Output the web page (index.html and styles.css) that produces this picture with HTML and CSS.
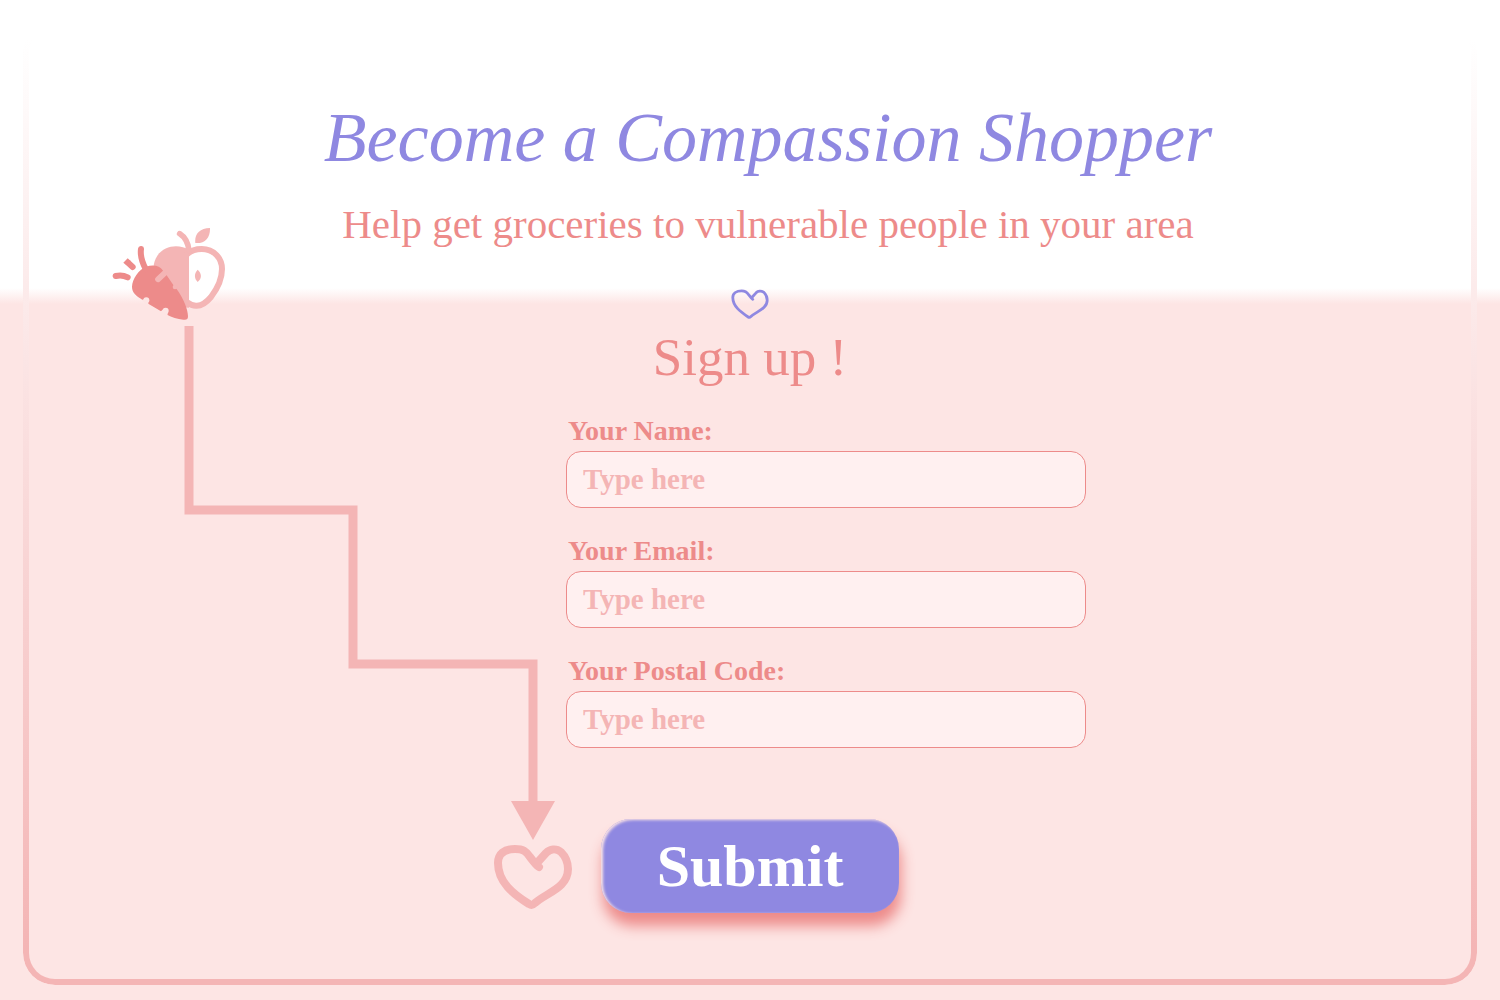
FILE: index.html
```html
<!DOCTYPE html>
<html lang="en">
<head>
<meta charset="utf-8">
<meta name="viewport" content="width=device-width, initial-scale=1">
<title>Become a Compassion Shopper</title>
<link rel="stylesheet" href="styles.css">
</head>
<body>
<main class="card">
  <svg class="trail" viewBox="108 224 472 692" aria-hidden="true">
    <g transform="translate(100 215) scale(.33333)">
      <!-- halved apple -->
      <path class="apple-flesh" d="M267 120C295 98 366 100 366 160C366 200 330 272 288 272L267 266Z"/>
      <path class="rose" d="M267 104C240 88 195 88 172 122C160 140 158 160 164 180L225 275L267 278Z"/>
      <path class="rose-line" stroke-width="18" d="M262 117C276 104 288 102 305 102C342 102 366 130 366 162C366 195 349 225 333 246C318 264 302 273 288 272C278 272 272 270 262 262"/>
      <path class="rose-line" stroke-width="17" d="M239 56C253 65 264 82 267 106"/>
      <path class="rose" d="M330 39C298 40 283 58 286 84C316 86 331 68 330 39ZM293 164C306 176 306 190 293 201C282 190 282 176 293 164Z"/>
      <!-- carrot -->
      <path class="coral" d="M96 215C97 192 116 163 138 155C160 148 180 152 188 166L202 184L220 210L232 225C250 250 264 284 264 304C264 314 259 315 250 314C232 312 215 307 201 299L183 289L146 267L127 254C108 243 96 232 96 215Z"/>
      <path class="rose-line" stroke-width="17" d="M193 175L174 193"/>
      <circle class="rose" cx="225" cy="216" r="7"/>
      <circle class="bite" cx="139" cy="256" r="9"/>
      <circle class="bite" cx="197" cy="287" r="9"/>
      <path class="bite" d="M126 255L139 250L145 264L144 272ZM181 290L193 280L204 290L202 302Z"/>
      <path class="coral-line" d="M123 102C120 123 126 141 137 162M47 183Q66 178 83 187M85 144L98 156"/>
      <path class="coral" d="M83 130L92 138L79 151L70 143Z"/>
    </g>
    <path class="trail-line" d="M189 326V510H353V664H533V804"/>
    <path class="rose" d="M511 801H555L533 840Z"/>
    <path class="rose-line" stroke-width="8" d="M539 867C536 865 533 861 530 857C526 851 523 849 515 849C504 849 498 854 498 863C498 882 513 894 529 904Q532 906 535 903C546 893 568 888 568 869C568 862 565 856 561 852C556 848 550 849 546 853L537 863"/>
  </svg>

  <div class="content">
    <header class="intro">
      <h1 class="title">Become a Compassion Shopper</h1>
      <p class="subtitle">Help get groceries to vulnerable people in your area</p>
    </header>
    <svg class="heart" viewBox="490 842 86 70" aria-hidden="true">
      <path d="M539 867C536 865 533 861 530 857C526 851 523 849 515 849C504 849 496 854 496 863C496 882 513 894 529 905Q532 907 535 904C546 893 570 888 570 869C570 862 567 856 563 852C557 848 550 849 546 853L537 863"/>
    </svg>
    <form class="signup">
      <h2 class="signup-title">Sign up !</h2>
      <div class="fields">
        <div class="field">
          <label for="name">Your Name:</label>
          <input id="name" name="name" type="text" placeholder="Type here">
        </div>
        <div class="field">
          <label for="email">Your Email:</label>
          <input id="email" name="email" type="email" placeholder="Type here">
        </div>
        <div class="field">
          <label for="postal">Your Postal Code:</label>
          <input id="postal" name="postal" type="text" placeholder="Type here">
        </div>
      </div>
      <button class="submit" type="submit">Submit</button>
    </form>
  </div>
</main>
</body>
</html>
```
FILE: styles.css
```css
:root {
  --violet: #8f88e1;
  --coral: #ed8b8a;
  --rose: #f4b5b5;
  --blush: #fde5e4;
  --blush-light: #fff0f0;
}

* {
  box-sizing: border-box;
}

body {
  display: flex;
  min-height: 100vh;
  margin: 0;
  padding: 20px 23px 15px;
  background: linear-gradient(#fff 288px, var(--blush) 304px);
  color: var(--coral);
  font-family: "Liberation Serif", "Times New Roman", serif;
}

.card {
  display: grid;
  flex: 1;
  position: relative;
}

/* Rounded frame that fades out towards the top */
.card::before {
  content: "";
  position: absolute;
  inset: 0;
  border: 6px solid transparent;
  border-radius: 32px;
  background: linear-gradient(#fff 2%, var(--rose) 96%) border-box;
  mask: linear-gradient(#000 0 0) padding-box exclude, linear-gradient(#000 0 0) border-box;
  pointer-events: none;
}

.trail,
.content {
  grid-area: 1 / 1;
}

.trail {
  width: 472px;
  margin: 204px 0 0 85px;
}

.content {
  display: flex;
  flex-direction: column;
  align-items: center;
  padding: 74px 24px 64px;
  position: relative;
}

.intro {
  padding-left: 36px;
  text-align: center;
}

.title {
  margin: 0;
  color: var(--violet);
  font-size: 70px;
  font-style: italic;
  font-weight: 400;
  line-height: 88px;
}

.subtitle {
  margin: 18px 0 0;
  font-size: 41px;
  line-height: 48px;
}

.heart {
  width: 40px;
  height: 36px;
  margin-top: 38px;
  fill: none;
  stroke: var(--violet);
  stroke-width: 6;
  stroke-linecap: round;
  stroke-linejoin: round;
}

.signup {
  display: flex;
  flex-direction: column;
  align-items: center;
  width: 100%;
  max-width: 672px;
}

.signup-title {
  margin: 5px 0 28px;
  font-size: 53px;
  font-weight: 400;
  line-height: 60px;
}

.fields {
  display: grid;
  gap: 27px;
  width: 100%;
  padding-left: 152px;
}

.field {
  display: grid;
  gap: 4px;
}

.field label {
  padding-left: 2px;
  font-size: 28px;
  font-weight: 700;
  line-height: 32px;
}

.field input {
  width: 100%;
  height: 57px;
  padding: 0 16px;
  border: 1px solid var(--coral);
  border-radius: 15px;
  background: var(--blush-light);
  color: var(--coral);
  font: 700 29px "Liberation Serif", "Times New Roman", serif;
}

.field input::placeholder {
  color: var(--rose);
  opacity: 1;
}

.submit {
  width: 298px;
  height: 94px;
  margin-top: 71px;
  padding: 0;
  border: 0;
  border-radius: 30px;
  background: var(--violet);
  box-shadow: 2px 13px 14px var(--coral), inset 2px 1px 3px var(--blush);
  color: #fff;
  font: 700 60px "Liberation Serif", "Times New Roman", serif;
  cursor: pointer;
}

.apple-flesh {
  fill: #fff;
}

.rose {
  fill: var(--rose);
}

.coral {
  fill: var(--coral);
}

.bite {
  fill: var(--blush);
}

.rose-line,
.coral-line,
.trail-line {
  fill: none;
  stroke: var(--rose);
  stroke-linecap: round;
  stroke-linejoin: round;
}

.coral-line {
  stroke: var(--coral);
  stroke-width: 18;
}

.trail-line {
  stroke-width: 9;
  stroke-linecap: butt;
  stroke-linejoin: miter;
}

@media (max-width: 1300px) {
  .trail {
    display: none;
  }

  .intro,
  .fields {
    padding-left: 0;
  }
}
```
